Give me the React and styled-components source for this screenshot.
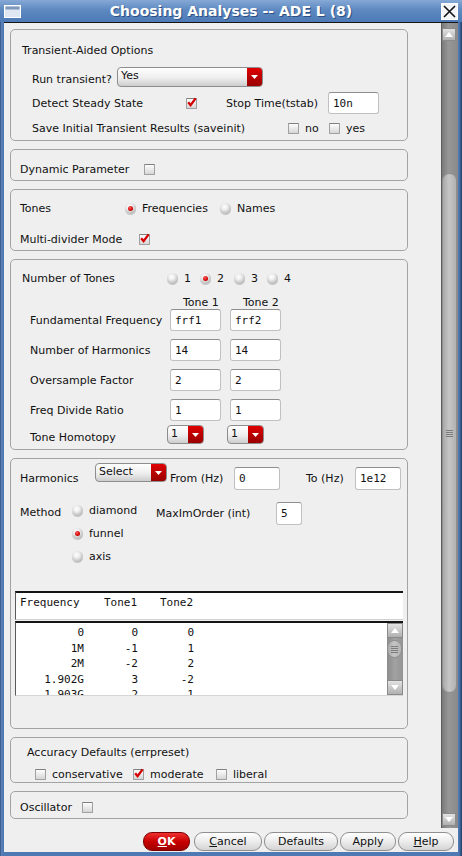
import styled, { createGlobalStyle } from 'styled-components'

const GlobalStyle = createGlobalStyle`
  html, body { margin: 0; padding: 0; background: #4f79b2; }
  body {
    font-family: 'DejaVu Sans', 'Liberation Sans', sans-serif;
    font-size: 11px;
    color: #111;
  }
  * { box-sizing: border-box; }
`

const Window = styled.div`
  width: 462px;
  height: 856px;
  display: flex;
  flex-direction: column;
  background: linear-gradient(90deg, #223c66 0, #5b84bc 1px, #4f79b2 3px, #4f79b2 calc(100% - 3px), #223c66 100%);
`

const TitleBar = styled.div`
  height: 22px;
  flex: none;
  display: grid;
  grid-template-columns: 24px 1fr 24px;
  align-items: center;
  padding: 0 4px;
  background: linear-gradient(#86a9d6, #5d88c0 45%, #4e7bb7);
`

const TitleText = styled.div`
  text-align: center;
  color: #fff;
  font-weight: bold;
  font-size: 14px;
  text-shadow: 1px 1px 0 #2f4f80;
  white-space: nowrap;
`

const Frame = styled.div`
  flex: 1;
  display: flex;
  flex-direction: column;
  margin: 0 4px 4px;
  background: #efefef;
  border-top: 1px solid #151515;
`

const Main = styled.div`
  height: 805px;
  display: flex;
  flex: none;
`

const ScrollArea = styled.div`
  flex: 1;
  overflow: hidden;
  padding: 6px 0 0 6px;
`

const Group = styled.div`
  width: 398px;
  height: ${p => p.$h}px;
  margin-bottom: 8px;
  border: 1px solid #a3a3a3;
  border-radius: 5px;
  padding: ${p => p.$pt || 0}px 0 0 9px;
  display: flex;
  flex-direction: column;
`

const Row = styled.div`
  display: flex;
  align-items: center;
  flex: none;
  height: ${p => p.$h}px;
  margin-top: ${p => p.$mt || 0}px;
  padding-left: ${p => p.$pl || 0}px;
`

const Label = styled.span`
  flex: none;
  white-space: nowrap;
  width: ${p => (p.$w ? `${p.$w}px` : 'auto')};
  margin-left: ${p => p.$ml || 0}px;
  padding-top: ${p => p.$dy || 0}px;
`

const Option = styled.span`
  flex: none;
  display: flex;
  align-items: center;
  gap: 6px;
  height: ${p => p.$h || 14}px;
  width: ${p => (p.$w ? `${p.$w}px` : 'auto')};
`

const Box = styled.span`
  width: 11px;
  height: 11px;
  flex: none;
  display: inline-flex;
  border: 1px solid #a0a0a0;
  border-top-color: #7f7f7f;
  border-radius: 1px;
  background: linear-gradient(#fdfdfd, #d6d6d6);
  svg { margin: -2px 0 0 -1px; overflow: visible; }
`

const RadioBall = styled.span`
  width: 11px;
  height: 11px;
  flex: none;
  border-radius: 50%;
  display: inline-flex;
  align-items: center;
  justify-content: center;
  background: radial-gradient(circle at 42% 35%, #ffffff 0, #eeeeee 30%, #bdbdbd 70%, #8e8e8e 100%);
  box-shadow: 0 1px 0 #c8c8c8;
  &::after {
    content: '';
    width: 5px;
    height: 5px;
    border-radius: 50%;
    background: ${p => (p.$on ? 'radial-gradient(circle at 40% 35%, #ff6060, #d00000 60%, #900)' : 'transparent')};
  }
`

function Check({ on }) {
  return (
    <Box>
      {on && (
        <svg width="11" height="11" viewBox="0 0 11 11">
          <path d="M2.2 5.2 L4.6 8.2 L9.6 1.4" fill="none" stroke="#d40000" strokeWidth="2.3" />
        </svg>
      )}
    </Box>
  )
}

const DropBox = styled.span`
  flex: none;
  display: flex;
  width: ${p => p.$w}px;
  height: ${p => p.$h}px;
  align-self: ${p => p.$self || 'auto'};
  border: 1px solid #8d8d8d;
  border-radius: 4px;
  overflow: hidden;
  background: linear-gradient(#ffffff, #eeeeee 55%, #cdcdcd);
`

const DropText = styled.span`
  flex: 1;
  padding: 1px 0 0 3px;
  line-height: 14px;
`

const DropBtn = styled.span`
  width: 15px;
  flex: none;
  display: flex;
  align-items: center;
  justify-content: center;
  background: linear-gradient(#e00000, #b40000 60%, #9a0000);
`

function Drop({ w, h = 19, text, self }) {
  return (
    <DropBox $w={w} $h={h} $self={self}>
      <DropText>{text}</DropText>
      <DropBtn>
        <svg width="7" height="4" viewBox="0 0 7 4">
          <path d="M0 0 H7 L3.5 4 Z" fill="#fff" />
        </svg>
      </DropBtn>
    </DropBox>
  )
}

const Field = styled.span`
  flex: none;
  display: flex;
  align-items: center;
  width: ${p => p.$w}px;
  height: ${p => p.$h || 22}px;
  margin-left: ${p => p.$ml || 0}px;
  margin-top: ${p => p.$mt || 0}px;
  padding-left: 4px;
  background: #fff;
  border: 1px solid #c0c0c0;
  border-top-color: #8e8e8e;
  border-radius: 3px;
  font-family: 'DejaVu Sans Mono', 'Liberation Mono', monospace;
  font-size: 11px;
`

const MethodBlock = styled.div`
  display: flex;
  align-items: flex-start;
  margin-top: 6px;
  flex: none;
`

const RadioCol = styled.div`
  width: 84px;
  display: flex;
  flex-direction: column;
`

const TallLabel = styled.span`
  flex: none;
  width: ${p => p.$w}px;
  height: 23px;
  line-height: 23px;
  margin-top: ${p => p.$mt || 0}px;
`

const Table = styled.div`
  width: 388px;
  margin: 23px 0 0 -5px;
  font-family: 'DejaVu Sans Mono', 'Liberation Mono', monospace;
  font-size: 11px;
  flex: none;
`

const TableHead = styled.div`
  height: 29px;
  background: #fff;
  border-top: 2px solid #141414;
  border-left: 1px solid #5a5a5a;
  border-bottom: 1px solid #d0d0d0;
  padding: 4px 0 0 4px;
  line-height: 12px;
  display: grid;
  grid-template-columns: 84px 56px auto;
`

const TableBody = styled.div`
  height: 75px;
  margin-top: 1px;
  background: #fff;
  border-top: 2px solid #141414;
  border-left: 1px solid #5a5a5a;
  border-bottom: 1px solid #d6d6d6;
  display: flex;
`

const Rows = styled.div`
  flex: 1;
  overflow: hidden;
  padding-top: 2px;
`

const DataRow = styled.div`
  display: grid;
  grid-template-columns: 68px 54px 56px;
  line-height: 15.5px;
  height: 15.5px;
  span { text-align: right; }
`

const TScroll = styled.div`
  width: 16px;
  flex: none;
  display: flex;
  flex-direction: column;
  background: linear-gradient(90deg, #8c8c8c, #a2a2a2 50%, #939393);
`

const Arrow = styled.span`
  flex: none;
  display: flex;
  align-items: center;
  justify-content: center;
  width: ${p => p.$w}px;
  height: ${p => p.$h}px;
  margin-top: ${p => p.$mt || '0px'};
  margin-bottom: ${p => p.$mb || 0}px;
  margin-left: ${p => p.$ml || 0}px;
  border: 1px solid #8a8a8a;
  background: linear-gradient(#e2e2e2, #b0b0b0);
`

const Thumb = styled.span`
  flex: none;
  display: flex;
  align-items: center;
  justify-content: center;
  width: ${p => p.$w}px;
  height: ${p => p.$h}px;
  margin-top: ${p => p.$mt}px;
  margin-left: ${p => p.$ml || 0}px;
  border-radius: 8px;
  border: 1px solid #8f8f8f;
  background: linear-gradient(90deg, #a8a8a8, #c6c6c6 45%, #b2b2b2);
`

const VScroll = styled.div`
  width: 17px;
  flex: none;
  display: flex;
  flex-direction: column;
  border-left: 1px solid #5e5e5e;
  background: linear-gradient(90deg, #7a7a7a, #979797 40%, #8a8a8a);
`

const ButtonBar = styled.div`
  height: 24px;
  flex: none;
  display: flex;
  justify-content: flex-end;
  align-items: flex-start;
  gap: 2px;
  padding: 4px 4px 0 0;
`

const Button = styled.span`
  width: ${p => p.$w}px;
  height: 19px;
  margin-right: ${p => p.$mr || 0}px;
  border-radius: 9px;
  display: flex;
  align-items: center;
  justify-content: center;
  border: 1px solid ${p => (p.$primary ? '#7a0000' : '#8f8f8f')};
  background: ${p => (p.$primary ? 'linear-gradient(#f03030, #c80000 50%, #a00000)' : 'linear-gradient(#ffffff, #ececec 50%, #d4d4d4)')};
  color: ${p => (p.$primary ? '#fff' : '#111')};
  font-weight: ${p => (p.$primary ? 'bold' : 'normal')};
  font-size: 11px;
  u { text-decoration: underline; }
`

function Grip({ w = 7 }) {
  return (
    <svg width={w} height="7" viewBox={`0 0 ${w} 7`}>
      {[0.5, 2.5, 4.5, 6.5].map(y => (
        <line key={y} x1="0" x2={w} y1={y} y2={y} stroke="#7d7d7d" strokeWidth="1" />
      ))}
    </svg>
  )
}

function Tri({ up }) {
  return (
    <svg width="8" height="5" viewBox="0 0 8 5">
      <path d={up ? 'M0 5 H8 L4 0 Z' : 'M0 0 H8 L4 5 Z'} fill="#fff" />
    </svg>
  )
}

const rows = [
  ['0', '0', '0'],
  ['1M', '-1', '1'],
  ['2M', '-2', '2'],
  ['1.902G', '3', '-2'],
  ['1.903G', '2', '-1'],
]

const toneRows = [
  ['Fundamental Frequency', 'frf1', 'frf2'],
  ['Number of Harmonics', '14', '14'],
  ['Oversample Factor', '2', '2'],
  ['Freq Divide Ratio', '1', '1'],
]

export default function App() {
  return (
    <Window>
      <GlobalStyle />
      <TitleBar>
        <svg width="17" height="13" viewBox="0 0 17 13">
          <rect x="0.5" y="0.5" width="16" height="12" fill="#dfe7f2" stroke="#ffffff" />
          <rect x="1.5" y="1.5" width="14" height="3" fill="#7e98bb" />
        </svg>
        <TitleText>Choosing Analyses -- ADE L (8)</TitleText>
        <svg width="17" height="17" viewBox="0 0 17 17" style={{ justifySelf: 'end' }}>
          <rect x="0.5" y="0.5" width="16" height="16" fill="#f3f5f8" stroke="#ffffff" />
          <path d="M3 3 L14 14 M14 3 L3 14" stroke="#111" strokeWidth="1.6" />
        </svg>
      </TitleBar>
      <Frame>
        <Main>
          <ScrollArea>
            <Group $h={112} $pt={10}>
              <Row $h={20} $pl={2}>Transient-Aided Options</Row>
              <Row $h={20} $mt={7} $pl={12}>
                <Label $w={85} $dy={5}>Run transient?</Label>
                <Drop w={146} h={20} text="Yes" />
              </Row>
              <Row $h={22} $mt={5} $pl={12}>
                <Label $w={154}>Detect Steady State</Label>
                <Check on />
                <Label $w={102} $ml={29}>Stop Time(tstab)</Label>
                <Field $w={51}>10n</Field>
              </Row>
              <Row $h={20} $mt={4} $pl={12}>
                <Label $w={256}>Save Initial Transient Results (saveinit)</Label>
                <Option $w={41}><Check />no</Option>
                <Option><Check />yes</Option>
              </Row>
            </Group>

            <Group $h={32} $pt={10}>
              <Row $h={19}>
                <Label $w={124}>Dynamic Parameter</Label>
                <Check />
              </Row>
            </Group>

            <Group $h={62} $pt={8}>
              <Row $h={20}>
                <Label $w={105}>Tones</Label>
                <Option $w={95}><RadioBall $on />Frequencies</Option>
                <Option><RadioBall />Names</Option>
              </Row>
              <Row $h={20} $mt={11}>
                <Label $w={119}>Multi-divider Mode</Label>
                <Check on />
              </Row>
            </Group>

            <Group $h={191} $pt={9}>
              <Row $h={18} $pl={2}>
                <Label $w={145}>Number of Tones</Label>
                <Option $w={33}><RadioBall />1</Option>
                <Option $w={34}><RadioBall $on />2</Option>
                <Option $w={33}><RadioBall />3</Option>
                <Option><RadioBall />4</Option>
              </Row>
              <Row $h={14} $mt={8}>
                <Label $w={163} />
                <Label $w={60}>Tone 1</Label>
                <Label>Tone 2</Label>
              </Row>
              {toneRows.map(([name, a, b], i) => (
                <Row key={name} $h={22} $mt={i ? 8 : 0} $pl={10}>
                  <Label $w={140}>{name}</Label>
                  <Field $w={51}>{a}</Field>
                  <Field $w={51} $ml={9}>{b}</Field>
                </Row>
              ))}
              <Row $h={19} $mt={4} $pl={10}>
                <Label $w={137} $dy={6}>Tone Homotopy</Label>
                <Drop w={37} text="1" />
                <Label $w={23} />
                <Drop w={37} text="1" />
              </Row>
            </Group>

            <Group $h={271} $pt={4}>
              <Row $h={30}>
                <Label $w={75}>Harmonics</Label>
                <Drop w={72} text="Select" self="flex-start" />
                <Label $w={64} $ml={3}>From (Hz)</Label>
                <Field $w={46} $h={23}>0</Field>
                <Label $w={49} $ml={26}>To (Hz)</Label>
                <Field $w={46} $h={23}>1e12</Field>
              </Row>
              <MethodBlock>
                <TallLabel $w={52} $mt={2}>Method</TallLabel>
                <RadioCol>
                  <Option $h={23}><RadioBall />diamond</Option>
                  <Option $h={23}><RadioBall $on />funnel</Option>
                  <Option $h={23}><RadioBall />axis</Option>
                </RadioCol>
                <TallLabel $w={120} $mt={3}>MaxImOrder (int)</TallLabel>
                <Field $w={26} $h={23} $mt={3}>5</Field>
              </MethodBlock>
              <Table>
                <TableHead>
                  <span>Frequency</span>
                  <span>Tone1</span>
                  <span>Tone2</span>
                </TableHead>
                <TableBody>
                  <Rows>
                    {rows.map(r => (
                      <DataRow key={r[0]}>
                        <span>{r[0]}</span>
                        <span>{r[1]}</span>
                        <span>{r[2]}</span>
                      </DataRow>
                    ))}
                  </Rows>
                  <TScroll>
                    <Arrow $w={16} $h={15}><Tri up /></Arrow>
                    <Thumb $w={15} $h={18} $mt={2}><Grip /></Thumb>
                    <Arrow $w={16} $h={15} $mt="auto"><Tri /></Arrow>
                  </TScroll>
                </TableBody>
              </Table>
            </Group>

            <Group $h={46} $pt={6}>
              <Row $h={16} $pl={7}>Accuracy Defaults (errpreset)</Row>
              <Row $h={14} $mt={7} $pl={15}>
                <Option $w={98}><Check />conservative</Option>
                <Option $w={83}><Check on />moderate</Option>
                <Option><Check />liberal</Option>
              </Row>
            </Group>

            <Group $h={28} $pt={6}>
              <Row $h={18}>
                <Label $w={62}>Oscillator</Label>
                <Check />
              </Row>
            </Group>
          </ScrollArea>
          <VScroll>
            <Arrow $w={14} $h={13} $mt="5px"><Tri up /></Arrow>
            <Thumb $w={15} $h={520} $mt={132}><Grip /></Thumb>
            <Arrow $w={14} $h={13} $mt="auto" $mb={2}><Tri /></Arrow>
          </VScroll>
        </Main>
        <ButtonBar>
          <Button $w={47} $mr={2} $primary><u>O</u>K</Button>
          <Button $w={68}><u>C</u>ancel</Button>
          <Button $w={74}>Defaults</Button>
          <Button $w={56}>Apply</Button>
          <Button $w={56}><u>H</u>elp</Button>
        </ButtonBar>
      </Frame>
    </Window>
  )
}
